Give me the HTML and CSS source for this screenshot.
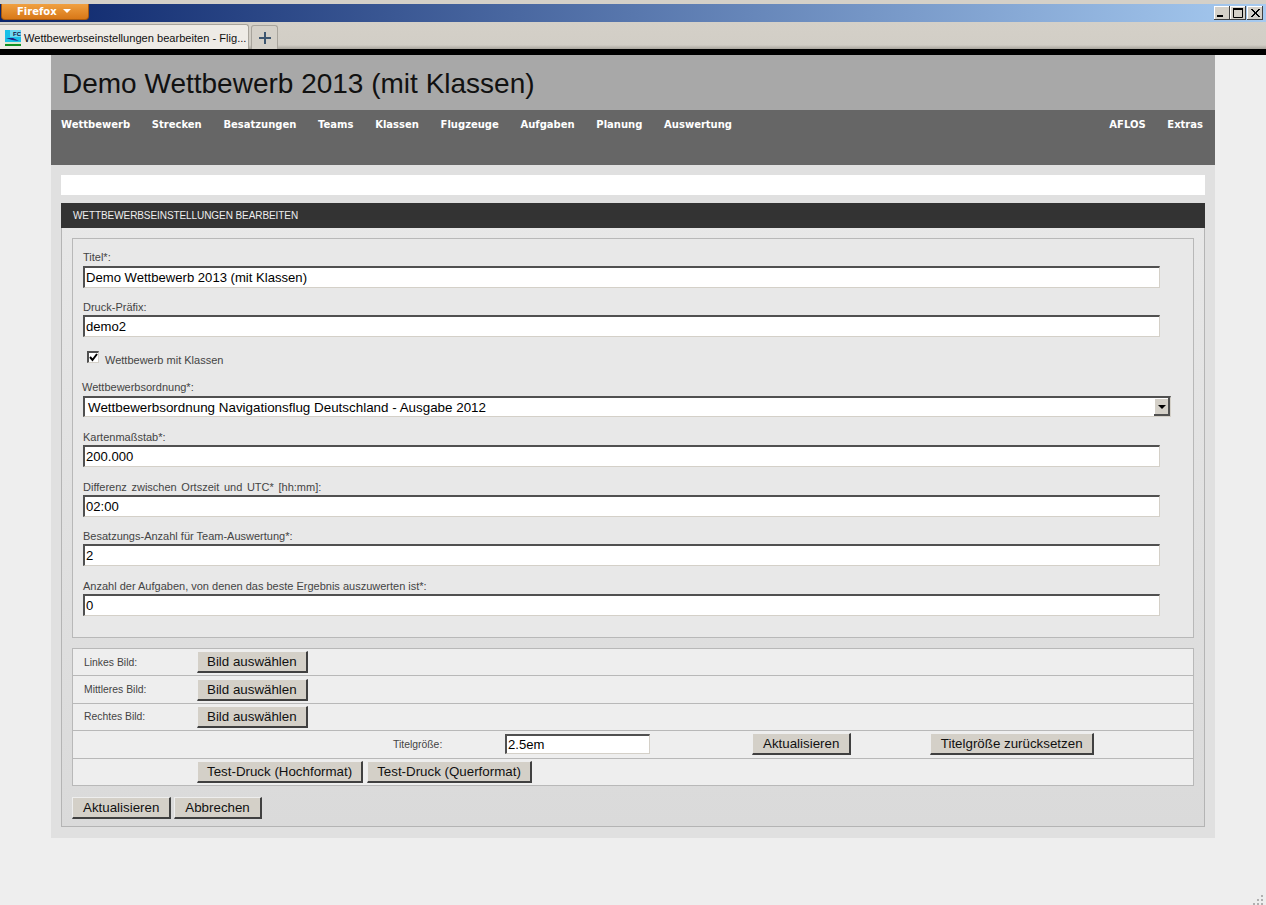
FILE: index.html
```html
<!DOCTYPE html>
<html lang="de">
<head>
<meta charset="UTF-8">
<title>Wettbewerbseinstellungen bearbeiten</title>
<link rel="stylesheet" href="styles.css">
</head>
<body>
<div class="titlebar">
    <div class="ffbutton">Firefox <span class="ffarrow"></span></div>
    <div class="winbtns">
        <span class="winbtn"><svg width="16" height="14"><rect x="3" y="9" width="6" height="2" fill="#000"/></svg></span>
        <span class="winbtn"><svg width="16" height="14"><path d="M3.500 2.500h9v9h-9z" fill="none" stroke="#000"/><rect x="3" y="2" width="10" height="2" fill="#000"/></svg></span>
        <span class="winbtn winbtn-close"><svg width="16" height="14"><path d="M4 3l8 8M5 3l8 8M12 3l-8 8M13 3l-8 8" stroke="#000" fill="none"/></svg></span>
    </div>
</div>
<div class="tabbar">
    <div class="tab">
        <svg class="favicon" width="16" height="16">
            <rect width="16" height="16" fill="#19c0e8"/>
            <rect x="5" y="0" width="11" height="7" fill="#70d8f0"/>
            <rect y="12" width="16" height="2" fill="#d8e8d0"/>
            <rect y="14" width="16" height="2" fill="#109020"/>
            <path d="M1 8l6 2 7 1-6-3z" fill="#202080"/>
            <text x="8" y="6" font-size="6" font-weight="bold" font-family="Liberation Sans" fill="#101040">FC</text>
        </svg>
        <span>Wettbewerbseinstellungen bearbeiten - Flig...</span>
    </div>
    <div class="newtab"><svg width="12" height="12"><path d="M0 6h12M6 0v12" stroke="#3d5670" stroke-width="2"/></svg></div>
</div>
<div class="blackline"></div>

<div class="wrapper">
    <div class="header"><h1>Demo Wettbewerb 2013 (mit Klassen)</h1></div>
    <div class="nav">
        <a>Wettbewerb</a>
        <a>Strecken</a>
        <a>Besatzungen</a>
        <a>Teams</a>
        <a>Klassen</a>
        <a>Flugzeuge</a>
        <a>Aufgaben</a>
        <a>Planung</a>
        <a>Auswertung</a>
        <a class="nav-right">AFLOS</a>
        <a>Extras</a>
    </div>
    <div class="content">
        <div class="messagebar"></div>
        <div class="panel">
            <div class="panel-head">WETTBEWERBSEINSTELLUNGEN BEARBEITEN</div>
            <div class="panel-body">
                <div class="fields">
                    <label class="lbl">Titel*:</label>
                    <input class="txt" value="Demo Wettbewerb 2013 (mit Klassen)">
                    <label class="lbl">Druck-Präfix:</label>
                    <input class="txt" value="demo2">
                    <div class="checkrow">
                        <span class="check"><svg width="9" height="9"><path d="M1 4l2.500 3L8 1" fill="none" stroke="#000" stroke-width="2"/></svg></span>
                        <span>Wettbewerb mit Klassen</span>
                    </div>
                    <label class="lbl lbl-select">Wettbewerbsordnung*:</label>
                    <div class="select">
                        <span>Wettbewerbsordnung Navigationsflug Deutschland - Ausgabe 2012</span>
                        <span class="select-btn"><span class="select-arrow"></span></span>
                    </div>
                    <label class="lbl">Kartenmaßstab*:</label>
                    <input class="txt" value="200.000">
                    <label class="lbl lbl-gap lbl-diff">Differenz zwischen Ortszeit und UTC* [hh:mm]:</label>
                    <input class="txt" value="02:00">
                    <label class="lbl">Besatzungs-Anzahl für Team-Auswertung*:</label>
                    <input class="txt" value="2">
                    <label class="lbl lbl-gap">Anzahl der Aufgaben, von denen das beste Ergebnis auszuwerten ist*:</label>
                    <input class="txt" value="0">
                </div>
                <div class="imgtable">
                    <div class="row">
                        <span class="row-label">Linkes Bild:</span>
                        <button class="btn">Bild auswählen</button>
                    </div>
                    <div class="row">
                        <span class="row-label">Mittleres Bild:</span>
                        <button class="btn">Bild auswählen</button>
                    </div>
                    <div class="row">
                        <span class="row-label">Rechtes Bild:</span>
                        <button class="btn">Bild auswählen</button>
                    </div>
                    <div class="row row-size">
                        <span class="size-label">Titelgröße:</span>
                        <input class="txt txt-size" value="2.5em">
                        <button class="btn btn-update">Aktualisieren</button>
                        <button class="btn btn-reset">Titelgröße zurücksetzen</button>
                    </div>
                    <div class="row row-print">
                        <span class="row-label"></span>
                        <button class="btn">Test-Druck (Hochformat)</button>
                        <button class="btn">Test-Druck (Querformat)</button>
                    </div>
                </div>
                <div class="actions">
                    <button class="btn">Aktualisieren</button>
                    <button class="btn">Abbrechen</button>
                </div>
            </div>
        </div>
    </div>
</div>
<div class="grip"><svg width="12" height="12"><path d="M9 1h2v2H9zM5 5h2v2H5zM9 5h2v2H9zM1 9h2v2H1zM5 9h2v2H5zM9 9h2v2H9z" fill="#b0b0b0"/></svg></div>
</body>
</html>
```

FILE: styles.css
```css
html, body {
    margin: 0;
    height: 905px;
    overflow: hidden;
}

body {
    background-color: #eeeeee;
    font-family: "Liberation Sans", Arial, sans-serif;
    position: relative;
}

/* browser window */
.titlebar {
    height: 18px;
    border-top: 4px solid #d4d0c8;
    background: linear-gradient(to right, #0a246a, #a6caf0);
    display: flex;
    justify-content: space-between;
    align-items: flex-start;
}

.ffbutton {
    width: 86px;
    height: 15px;
    margin-left: 1px;
    border-radius: 0 0 4px 4px;
    border: 1px solid #a85a10;
    border-top: none;
    background: linear-gradient(to bottom, #f0a040, #d87818);
    color: #fff;
    font-size: 10px;
    font-weight: bold;
    line-height: 15px;
    text-indent: 15px;
    font-family: "DejaVu Sans", sans-serif;
}

.ffarrow {
    display: inline-block;
    width: 0;
    height: 0;
    border: 4px solid transparent;
    border-top: 4px solid #fff;
    border-bottom: none;
    margin-left: 3px;
    vertical-align: 2px;
}

.winbtns {
    display: flex;
    margin-top: 2px;
    margin-right: 3px;
}

.winbtn {
    width: 16px;
    height: 14px;
    background-color: #d4d0c8;
    box-shadow: inset -1px -1px #404040, inset 1px 1px #fff;
    display: block;
}

.winbtn-close {
    margin-left: 1px;
}

.winbtn svg {
    display: block;
}

.tabbar {
    height: 27px;
    background: linear-gradient(to bottom, #d4d0c8, #d2cec6 85%, #a8a49c);
    display: flex;
    align-items: flex-end;
    gap: 2px;
}

.tab {
    width: 249px;
    height: 25px;
    box-sizing: border-box;
    background-color: #eeebe6;
    border: 1px solid #a8a49c;
    border-left: none;
    border-bottom: none;
    border-radius: 0 3px 0 0;
    display: flex;
    align-items: center;
    padding: 1px 0 0 5px;
    gap: 3px;
    font-size: 11.100px;
    color: #111;
    white-space: nowrap;
    overflow: hidden;
}

.favicon {
    flex-shrink: 0;
}

.newtab {
    width: 27px;
    height: 24px;
    box-sizing: border-box;
    border: 1px solid #a8a49c;
    border-bottom: none;
    border-radius: 3px 3px 0 0;
    background-color: #d4d0c8;
    display: flex;
    align-items: center;
    justify-content: center;
}

.blackline {
    height: 5px;
    background-color: #000;
    border-top: 1px solid #000;
}

/* page */
.wrapper {
    width: 1164px;
    margin-left: 51px;
}

.header {
    height: 55px;
    background-color: #a8a8a8;
    padding-left: 11px;
    box-sizing: border-box;
}

.header h1 {
    margin: 0;
    font-weight: normal;
    font-size: 28px;
    line-height: 57px;
    color: #111;
}

.nav {
    height: 55px;
    box-sizing: border-box;
    background-color: #666666;
    display: flex;
    gap: 21.700px;
    padding: 8px 12px 0 10px;
}

.nav a {
    color: #fff;
    font-size: 10px;
    font-weight: bold;
    line-height: 14px;
    font-family: "DejaVu Sans", sans-serif;
}

.nav .nav-right {
    margin-left: auto;
}

.content {
    height: 673px;
    box-sizing: border-box;
    background-color: #e0e0e0;
    padding: 10px;
}

.messagebar {
    height: 20px;
    background-color: #fff;
    margin-bottom: 8px;
}

.panel {
    height: 624px;
    box-sizing: border-box;
    border: 1px solid #b4b4b4;
    border-top: none;
    background: linear-gradient(to bottom, #e8e8e8, #dadada);
}

.panel-head {
    height: 25px;
    margin: 0 -1px;
    padding-left: 12px;
    background-color: #333333;
    color: #eee;
    font-size: 10px;
    letter-spacing: -0.080px;
    line-height: 25px;
}

.panel-body {
    padding: 10px 10px 0;
}

.fields {
    height: 400px;
    box-sizing: border-box;
    border: 1px solid #b8b8b8;
    background-color: #e8e8e8;
    padding: 11px 10px 0;
    display: flex;
    flex-direction: column;
    align-items: flex-start;
}

.lbl {
    font-size: 11px;
    line-height: 15px;
    color: #444;
}

.lbl-gap {
    margin-top: 1px;
}

.lbl-diff {
    word-spacing: 1.600px;
}

.lbl-select {
    margin-left: -1px;
    margin-top: 1px;
}

.lbl:first-child {
    margin-bottom: 1px;
}

.txt {
    display: block;
    width: 1077px;
    height: 22px;
    box-sizing: border-box;
    margin: 0 0 12px;
    padding: 1px;
    border-style: solid;
    border-width: 2px 1px 1px 2px;
    border-color: #505050 #d4d0c8 #d4d0c8 #505050;
    background-color: #fff;
    font-family: "Liberation Sans", Arial, sans-serif;
    font-size: 13.100px;
    color: #000;
    outline: none;
}

.checkrow {
    display: flex;
    align-items: flex-start;
    height: 14px;
    margin: 4px 0 12px 4px;
    font-size: 11px;
    line-height: 14px;
    color: #444;
    gap: 6px;
}

.check {
    display: block;
    width: 12px;
    height: 12px;
    box-sizing: border-box;
    margin-top: -2px;
    border-style: solid;
    border-width: 2px 1px 1px 2px;
    border-color: #505050 #d4d0c8 #d4d0c8 #505050;
    background-color: #fff;
}

.check svg {
    display: block;
}

.select {
    width: 1088px;
    height: 21px;
    box-sizing: border-box;
    margin-bottom: 13px;
    margin-top: 1px;
    border-style: solid;
    border-width: 2px 1px 1px 2px;
    border-color: #505050 #d4d0c8 #d4d0c8 #505050;
    background-color: #fff;
    display: flex;
    justify-content: space-between;
    align-items: center;
    padding-left: 3px;
    font-size: 13.400px;
    color: #000;
}

.select-btn {
    width: 16px;
    height: 18px;
    background-color: #d4d0c8;
    box-shadow: inset -2px -2px #505050, inset 1px 1px #fff;
    display: flex;
    align-items: center;
    justify-content: center;
}

.select-arrow {
    width: 0;
    height: 0;
    border: 4px solid transparent;
    border-top: 4px solid #000;
    border-bottom: none;
}

.imgtable {
    margin-top: 10px;
    border: 1px solid #b8b8b8;
    border-bottom: none;
    background-color: #eeeeee;
}

.row {
    height: 27.400px;
    box-sizing: border-box;
    display: flex;
    align-items: center;
    border-bottom: 1px solid #b8b8b8;
    padding-left: 11px;
    font-size: 10.400px;
    color: #444;
}

.row-label {
    width: 113px;
}

.btn {
    height: 22px;
    box-sizing: border-box;
    padding: 0 9px;
    border-style: solid;
    border-width: 1px 2px 2px 1px;
    border-color: #eeeeee #404040 #404040 #eeeeee;
    background-color: #d4d0c8;
    font-family: "Liberation Sans", Arial, sans-serif;
    font-size: 13.330px;
    color: #111;
}

.row-print .btn + .btn {
    margin-left: 4px;
}

.size-label {
    margin-left: 309px;
    width: 112px;
}

.txt-size {
    width: 145px;
    height: 20px;
    margin: 0;
}

.btn-update {
    margin-left: 102px;
    padding: 0 10px;
}

.btn-reset {
    margin-left: 79px;
    padding: 0 9.500px;
}

.actions {
    margin-top: 11px;
    display: flex;
    gap: 3px;
}

.actions .btn {
    padding: 0 10px;
}

.grip {
    position: absolute;
    right: 2px;
    bottom: 1px;
    height: 12px;
}
```
